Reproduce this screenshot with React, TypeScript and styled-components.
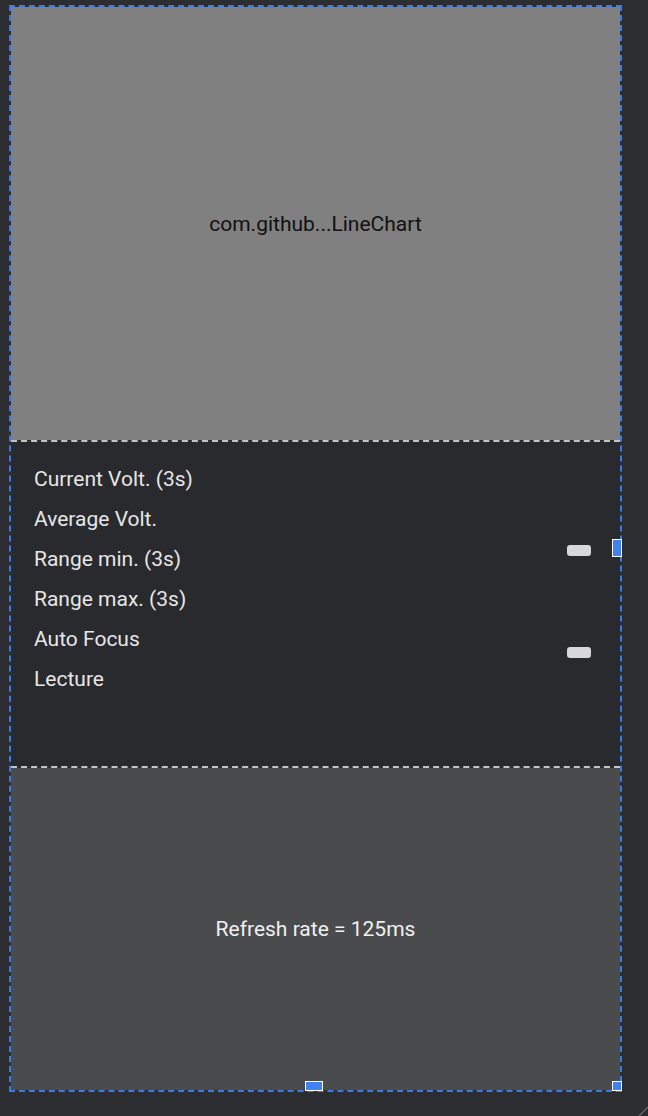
import React from "react";
import styled, { createGlobalStyle } from "styled-components";

const GlobalStyles = createGlobalStyle`
  html, body {
    margin: 0;
    padding: 0;
    height: 100%;
    background: #2b2d30;
    font-family: Roboto, "Noto Sans", sans-serif;
  }
`;

const Page = styled.div`
  position: relative;
  width: 648px;
  height: 1116px;
  padding: 5px 0 0 9px;
  box-sizing: border-box;
  overflow: hidden;
`;

const Frame = styled.div`
  position: relative;
  width: 613px;
  height: 1087px;
  box-sizing: border-box;
  border: 2px dashed #3c7ae6;
  display: flex;
  flex-direction: column;
`;

const ChartArea = styled.div`
  height: 433px;
  background: #808080;
  display: flex;
  align-items: center;
  justify-content: center;
  color: #111;
  font-size: 21px;
  box-sizing: border-box;
`;

const Divider = styled.div`
  height: 0;
  border-top: 2px dashed #c4c4c4;
`;

const Controls = styled.div`
  height: 324px;
  background: #292a2d;
  display: flex;
  justify-content: space-between;
  box-sizing: border-box;
`;

const LabelList = styled.div`
  display: flex;
  flex-direction: column;
  padding: 17px 0 0 23px;
`;

const Label = styled.div`
  color: #e6e6e6;
  font-size: 21px;
  line-height: 40px;
`;

const SwitchColumn = styled.div`
  display: flex;
  flex-direction: column;
  gap: 91px;
  padding: 103px 29px 0 0;
`;

const Pill = styled.div`
  width: 24px;
  height: 11px;
  border-radius: 3px;
  background: #d8d8d8;
`;

const Footer = styled.div`
  flex: 1;
  background: #4a4b4d;
  display: flex;
  align-items: center;
  justify-content: center;
  color: #f0f0f0;
  font-size: 21px;
`;

const Handle = styled.div<{ $left: number; $top: number; $w: number; $h: number }>`
  position: absolute;
  left: ${(p) => p.$left}px;
  top: ${(p) => p.$top}px;
  width: ${(p) => p.$w}px;
  height: ${(p) => p.$h}px;
  box-sizing: border-box;
  background: #3f82f0;
  border: 1px solid #ffffff;
`;

const Grip = styled.svg`
  position: absolute;
  right: 0;
  bottom: 0;
`;

const labels = [
  "Current Volt. (3s)",
  "Average Volt.",
  "Range min. (3s)",
  "Range max. (3s)",
  "Auto Focus",
  "Lecture",
];

export default function App() {
  return (
    <>
      <GlobalStyles />
      <Page>
        <Frame>
          <ChartArea>com.github...LineChart</ChartArea>
          <Divider />
          <Controls>
            <LabelList>
              {labels.map((l) => (
                <Label key={l}>{l}</Label>
              ))}
            </LabelList>
            <SwitchColumn>
              <Pill />
              <Pill />
            </SwitchColumn>
          </Controls>
          <Divider />
          <Footer>Refresh rate = 125ms</Footer>
        </Frame>
        <Handle $left={612} $top={539} $w={10} $h={18} />
        <Handle $left={305} $top={1081} $w={18} $h={10} />
        <Handle $left={612} $top={1081} $w={10} $h={10} />
        <Grip width="10" height="10" viewBox="0 0 10 10">
          <line x1="1" y1="10" x2="10" y2="1" stroke="#6a6c70" strokeWidth="1.2" />
        </Grip>
      </Page>
    </>
  );
}
